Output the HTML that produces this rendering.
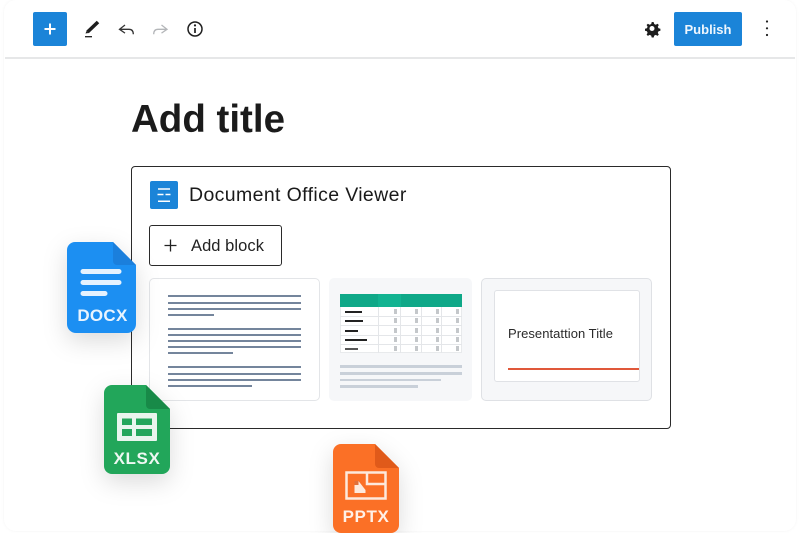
<!DOCTYPE html>
<html><head><meta charset="utf-8">
<style>
html,body{margin:0;padding:0;background:#fff}
body{width:800px;height:533px;overflow:hidden;font-family:"Liberation Sans",sans-serif;color:#1e1e1e}
#w{position:relative;width:800px;height:533px;overflow:hidden;filter:blur(.35px)}
.a{position:absolute;box-sizing:border-box}
.l{position:absolute;height:2px;background:#74859c}
.g{position:absolute;height:2.5px;background:#c9d0d9}
.v{position:absolute;width:1px;top:307px;height:46px;background:#e4e6e9}
.h{position:absolute;height:1px;left:340px;width:122px;background:#e4e6e9}
.d{position:absolute;height:2px;left:345px;background:#222}
.c{position:absolute;width:3px;height:5px;background:#c4c7ca}
</style></head>
<body><div id="w">
<div class="a" style="left:4px;top:0;width:792px;height:531px;background:#fff;border-radius:12px;box-shadow:0 0 3px rgba(0,0,0,.05)"></div>
<div class="a" style="left:5px;top:57px;width:790px;height:1.5px;background:#e6e7e8"></div>

<div class="a" style="left:33px;top:12px;width:34px;height:34px;background:#1b84d8;border-radius:2px"></div>
<svg class="a" style="left:0;top:0" width="800" height="60" viewBox="0 0 800 60">
<path d="M50 23.500v11M44.500 29h11" stroke="#fff" stroke-width="2" fill="none"/>
<path d="M87.500 32l10.500-10" stroke="#1e1e1e" stroke-width="3.600" fill="none"/>
<path d="M85.500 33.500l1-2.500 2 2z" fill="#1e1e1e"/>
<path d="M85 36.700h7" stroke="#1e1e1e" stroke-width="1.300"/>
<path d="M125 25l-5.500 4.300 5.500 3.800M120 29.300h9c3 0 4.300 1.800 4.300 5" stroke="#333" stroke-width="1.300" fill="none"/>
<path d="M161.500 25l5.500 4.300-5.500 3.800M167 29.300h-9c-3 0-4.300 1.800-4.300 5" stroke="#b4b6b9" stroke-width="1.300" fill="none"/>
<circle cx="195" cy="29" r="7" stroke="#1e1e1e" stroke-width="1.500" fill="none"/>
<path d="M195 28v5" stroke="#1e1e1e" stroke-width="1.700"/><circle cx="195" cy="25.400" r="1.100" fill="#1e1e1e"/>
<path d="M652 22l1.700.1.500 1.900 1.600.7 1.700-1 1.300 1.300-1 1.700.7 1.600 1.900.5v2l-1.900.5-.7 1.600 1 1.700-1.300 1.300-1.700-1-1.600.7-.5 1.900h-2l-.5-1.900-1.600-.7-1.700 1-1.300-1.300 1-1.700-.7-1.600-1.900-.5v-2l1.900-.5.7-1.600-1-1.700 1.300-1.300 1.700 1 1.600-.7.500-1.900z" fill="#1e1e1e"/>
<circle cx="652" cy="28.500" r="2.500" fill="#fff"/>
<circle cx="767" cy="21.500" r="1.100" fill="#1e1e1e"/><circle cx="767" cy="28.300" r="1.100" fill="#1e1e1e"/><circle cx="767" cy="35" r="1.100" fill="#1e1e1e"/>
</svg>
<div class="a" style="left:674px;top:12px;width:68px;height:34px;background:#1b84d8;border-radius:2px;color:#eef6fd;font-size:13px;font-weight:bold;line-height:35px;text-align:center">Publish</div>

<div class="a" style="left:131px;top:96px;font-size:38.500px;font-weight:bold;line-height:48px;color:#1b1b1b;white-space:nowrap">Add title</div>

<div class="a" style="left:131px;top:166px;width:540px;height:263px;border:1px solid #2a2a2a;border-radius:4px;background:#fff"></div>
<div class="a" style="left:150px;top:181px;width:28px;height:28px;background:#1b84d8;border-radius:2px"></div>
<svg class="a" style="left:150px;top:181px" width="28" height="28"><path d="M8 8h12M8 20.300h12M7.500 13.500h6M15.500 13.500h5" stroke="#fff" stroke-width="1.500"/></svg>
<div class="a" style="left:189px;top:183px;font-size:19.500px;letter-spacing:.37px;line-height:24px;white-space:nowrap;color:#1a1a1a">Document Office Viewer</div>
<div class="a" style="left:149px;top:225px;width:133px;height:41px;border:1px solid #2a2a2a;border-radius:3px;background:#fff"></div>
<svg class="a" style="left:160px;top:236px" width="20" height="20"><path d="M10.500 3.500v12M4.500 9.500h12" stroke="#222" stroke-width="1.300"/></svg>
<div class="a" style="left:191px;top:236px;font-size:16.500px;letter-spacing:.06px;line-height:20px;white-space:nowrap;color:#222">Add block</div>

<div class="a" style="left:149px;top:278px;width:171px;height:123px;border:1px solid #e3e5e8;border-radius:5px;background:#fff"></div>
<div class="l" style="left:168px;top:295px;width:133px"></div>
<div class="l" style="left:168px;top:301.500px;width:133px"></div>
<div class="l" style="left:168px;top:307.500px;width:133px"></div>
<div class="l" style="left:168px;top:313.500px;width:46px"></div>
<div class="l" style="left:168px;top:327.500px;width:133px"></div>
<div class="l" style="left:168px;top:333.500px;width:133px"></div>
<div class="l" style="left:168px;top:339.500px;width:133px"></div>
<div class="l" style="left:168px;top:346px;width:133px"></div>
<div class="l" style="left:168px;top:352px;width:65px"></div>
<div class="l" style="left:168px;top:366px;width:133px"></div>
<div class="l" style="left:168px;top:372.500px;width:133px"></div>
<div class="l" style="left:168px;top:378.500px;width:133px"></div>
<div class="l" style="left:168px;top:384.500px;width:84px"></div>

<div class="a" style="left:329px;top:278px;width:143px;height:123px;background:#f6f7f9;border-radius:5px"></div>
<div class="a" style="left:340px;top:294px;width:122px;height:59px;background:#fff;border:1px solid #e8eaec"></div>
<div class="a" style="left:340px;top:294px;width:122px;height:13px;background:#0fa888"></div>
<div class="a" style="left:378px;top:294px;width:23px;height:13px;background:#12b391"></div>
<div class="v" style="left:378px"></div><div class="v" style="left:400px"></div><div class="v" style="left:421px"></div><div class="v" style="left:441px"></div>
<div class="h" style="top:316px"></div><div class="h" style="top:325px"></div><div class="h" style="top:335px"></div><div class="h" style="top:344px"></div>
<div class="d" style="top:311px;width:17px"></div>
<div class="d" style="top:320px;width:18px"></div>
<div class="d" style="top:330px;width:13px"></div>
<div class="d" style="top:339px;width:22px"></div>
<div class="d" style="top:348px;width:13px;background:#555"></div>
<div class="c" style="left:394px;top:309px"></div><div class="c" style="left:415px;top:309px"></div><div class="c" style="left:436px;top:309px"></div><div class="c" style="left:456px;top:309px"></div>
<div class="c" style="left:394px;top:318px"></div><div class="c" style="left:415px;top:318px"></div><div class="c" style="left:436px;top:318px"></div><div class="c" style="left:456px;top:318px"></div>
<div class="c" style="left:394px;top:328px"></div><div class="c" style="left:415px;top:328px"></div><div class="c" style="left:436px;top:328px"></div><div class="c" style="left:456px;top:328px"></div>
<div class="c" style="left:394px;top:337px"></div><div class="c" style="left:415px;top:337px"></div><div class="c" style="left:436px;top:337px"></div><div class="c" style="left:456px;top:337px"></div>
<div class="c" style="left:394px;top:346px"></div><div class="c" style="left:415px;top:346px"></div><div class="c" style="left:436px;top:346px"></div><div class="c" style="left:456px;top:346px"></div>
<div class="g" style="left:340px;top:365px;width:122px"></div>
<div class="g" style="left:340px;top:372px;width:122px"></div>
<div class="g" style="left:340px;top:378.500px;width:101px"></div>
<div class="g" style="left:340px;top:385px;width:78px"></div>

<div class="a" style="left:481px;top:278px;width:171px;height:123px;background:#f6f7f9;border:1px solid #dfe1e5;border-radius:5px"></div>
<div class="a" style="left:494px;top:290px;width:146px;height:92px;background:#fff;border:1px solid #e0e2e6;border-radius:3px"></div>
<div class="a" style="left:508px;top:326px;font-size:13px;letter-spacing:.05px;line-height:16px;white-space:nowrap;color:#2a2a2a">Presentattion Title</div>
<div class="a" style="left:508px;top:368px;width:131px;height:2px;background:#e0583a"></div>

<svg class="a" style="left:0;top:0;overflow:visible" width="800" height="533" viewBox="0 0 800 533">
<defs>
<filter id="s" x="-60%" y="-60%" width="220%" height="220%"><feDropShadow dx="0" dy="8" stdDeviation="12" flood-color="#000" flood-opacity=".14"/></filter>
</defs>
<g filter="url(#s)"><path d="M75 242h38l23 23v59a9 9 0 0 1-9 9H76a9 9 0 0 1-9-9V250a8 8 0 0 1 8-8z" fill="#1f8ff2"/></g>
<path d="M113 242l23 23h-19a4 4 0 0 1-4-4z" fill="#1b7fdc"/>
<path d="M83 271.500h36M83 282.500h36M83 293.500h22" stroke="#e5f2fe" stroke-width="5" stroke-linecap="round"/>
<text x="102.500" y="321" font-family="Liberation Sans" font-weight="700" font-size="17" letter-spacing=".3" text-anchor="middle" fill="#e9f4fe">DOCX</text>

<g filter="url(#s)"><path d="M112 385h34l24 24v57a8 8 0 0 1-8 8h-50a8 8 0 0 1-8-8v-73a8 8 0 0 1 8-8z" fill="#20a65a"/></g>
<path d="M146 385l24 24h-20a4 4 0 0 1-4-4z" fill="#188a48"/>
<rect x="117" y="413" width="40" height="28" rx="1" fill="#e9f5ee"/>
<path d="M122 418.500h10v6.500h-10zM136 418.500h16v6.500h-16zM122 429h10v7h-10zM136 429h16v7h-16z" fill="#23a65c"/>
<text x="137" y="464" font-family="Liberation Sans" font-weight="700" font-size="17" letter-spacing=".6" text-anchor="middle" fill="#eef8f2">XLSX</text>

<g filter="url(#s)"><path d="M341 444h34l24 24v57a8 8 0 0 1-8 8h-50a8 8 0 0 1-8-8v-73a8 8 0 0 1 8-8z" fill="#fb6f26"/></g>
<path d="M375 444l24 24h-20a4 4 0 0 1-4-4z" fill="#e05a1a"/>
<rect x="346.500" y="472.500" width="39" height="26" fill="none" stroke="#fde9dc" stroke-width="2.500"/>
<path d="M367 473v11h18" fill="none" stroke="#fde9dc" stroke-width="2.500"/>
<path d="M354.500 481h4l7 9v3h-11z" fill="#fde9dc"/>
<path d="M354.500 481h4v4h-4z" fill="#e0703a"/>
<text x="366" y="522" font-family="Liberation Sans" font-weight="700" font-size="17" letter-spacing=".6" text-anchor="middle" fill="#fff0e6">PPTX</text>
</svg>
</div></body></html>
